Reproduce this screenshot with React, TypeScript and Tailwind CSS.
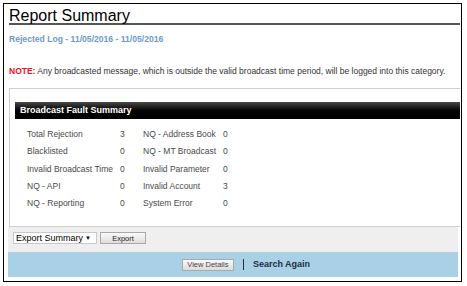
import React from 'react';

const rows: [string, string, string, string][] = [
  ['Total Rejection', '3', 'NQ - Address Book', '0'],
  ['Blacklisted', '0', 'NQ - MT Broadcast', '0'],
  ['Invalid Broadcast Time', '0', 'Invalid Parameter', '0'],
  ['NQ - API', '0', 'Invalid Account', '3'],
  ['NQ - Reporting', '0', 'System Error', '0'],
];

export default function App() {
  return (
    <div className="w-[467px] h-[286px] bg-white pt-[3px] pl-[3px] font-['Liberation_Sans',Arial,sans-serif]">
      <div className="w-[459px] h-[279px] border border-black pr-[1px] flex flex-col">
        {/* title */}
        <div className="ml-[5px] mt-[5px] border-b-2 border-[#555] text-[16px] leading-[14px] text-black">
          Report Summary
        </div>
        <div className="mt-[8px] ml-[5px] text-[8.6px] leading-[12px] font-bold text-[#6b9ccb]">
          Rejected Log - 11/05/2016 - 11/05/2016
        </div>
        <div className="mt-[20px] ml-[5px] text-[8.5px] leading-[12px] text-[#333] whitespace-nowrap">
          <span className="font-bold text-[#e8121a]">NOTE:</span> Any broadcasted message, which is outside the valid broadcast time period, will be logged into this category.
        </div>

        {/* summary panel */}
        <div className="mt-[11px] ml-[5px] border-l border-t border-b border-[#cfcfcf] pt-[13px] pl-[5px] pb-[14px]">
          <div className="h-[17px] bg-gradient-to-b from-[#4a4a4a] via-[#050505] to-black text-white font-bold text-[9px] leading-[17px] pl-[5px]">
            Broadcast Fault Summary
          </div>
          <div className="mt-[7px] pl-[12px] grid grid-cols-[93px_23px_80px_1fr] text-[8.5px] leading-[17.3px] text-[#4a4a4a]">
            {rows.map(([a, b, c, d]) => (
              <React.Fragment key={a}>
                <div>{a}</div>
                <div>{b}</div>
                <div>{c}</div>
                <div>{d}</div>
              </React.Fragment>
            ))}
          </div>
        </div>

        {/* export bar */}
        <div className="ml-[4px] mr-[2px] h-[25px] bg-[#efefef] flex items-start gap-[3px] pt-[5px] pl-[5px]">
          <div className="w-[84px] h-[12px] bg-white border border-[#c8c8c8] flex items-center justify-between pl-[2px] pr-[5px] text-[9px] leading-none text-black">
            <span>Export Summary</span>
            <span className="text-[6px]">▼</span>
          </div>
          <div className="w-[46px] h-[12px] border border-[#a9a9a9] bg-gradient-to-b from-[#fafafa] to-[#dedede] flex items-center justify-center text-[7.5px] leading-none text-[#222]">
            Export
          </div>
        </div>

        {/* actions */}
        <div className="ml-[4px] mr-[2px] h-[25px] bg-[#a9d0e5] flex items-center justify-center gap-[9px]">
          <div className="ml-[26px] w-[52px] h-[12px] border border-[#a9a9a9] bg-gradient-to-b from-[#fafafa] to-[#dcdcdc] flex items-center justify-center text-[7.5px] leading-none text-[#444]">
            View Details
          </div>
          <div className="w-[1px] h-[11px] bg-[#1c2f45]" />
          <div className="text-[9px] font-bold text-[#1c2f45]">Search Again</div>
        </div>
      </div>
    </div>
  );
}
